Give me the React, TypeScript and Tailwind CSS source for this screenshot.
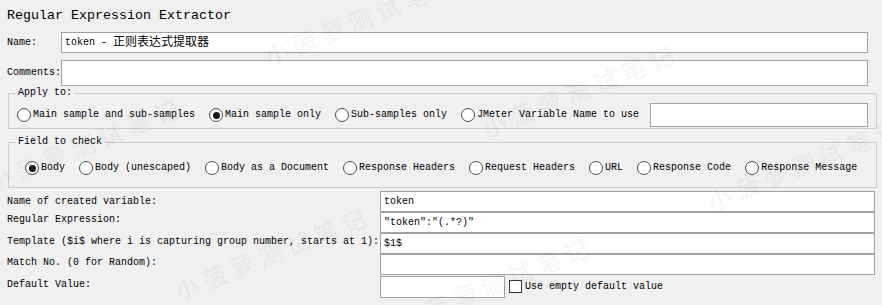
import React from "react";

const mono = { fontFamily: '"Liberation Mono", "Noto Sans CJK SC", monospace' };

function Radio({ checked }: { checked?: boolean }) {
  return (
    <span className="w-[14px] h-[14px] rounded-full border border-[#4a4a4a] bg-white flex items-center justify-center shrink-0">
      {checked && <span className="w-[7px] h-[7px] rounded-full bg-[#1a1a1a]" />}
    </span>
  );
}

function RadioItem({ label, checked }: { label: string; checked?: boolean }) {
  return (
    <div className="flex items-center gap-[2px] h-[14px]">
      <Radio checked={checked} />
      <span className="leading-[14px] whitespace-pre">{label}</span>
    </div>
  );
}

function Box({ className, children }: { className?: string; children?: React.ReactNode }) {
  return (
    <div className={"bg-white border border-[#a2a2a2] flex items-center pl-[3px] leading-[12px] whitespace-pre " + (className ?? "")}>
      {children}
    </div>
  );
}

const marks: { x: number; y: number }[] = [
  { x: 272, y: 70 },
  { x: 490, y: 142 },
  { x: 715, y: 215 },
  { x: -5, y: 196 },
  { x: 182, y: 305 },
  { x: 405, y: 335 },
];

export default function App() {
  return (
    <div className="relative w-[882px] h-[305px] bg-[#f0f0f0] overflow-hidden text-[10px] text-[#000]" style={mono}>
      <div className="pl-[7px] pt-[8px] h-[24px] text-[13.33px] leading-[16px]">Regular Expression Extractor</div>

      <div className="flex items-center mt-[8px] h-[21px]">
        <div className="w-[61px] pl-[7px] leading-[12px]">Name:</div>
        <Box className="w-[807px] h-[21px]">
          token - <span className="text-[12px]">正则表达式提取器</span>
        </Box>
      </div>

      <div className="flex items-center mt-[7px] h-[26px]">
        <div className="w-[61px] pl-[7px] leading-[12px]">Comments:</div>
        <Box className="w-[807px] h-[26px]" />
      </div>

      <fieldset className="ml-[8px] w-[869px] mt-[1px] border border-[#cdcdcd] pt-[4px] pb-[1px] pl-[8px] pr-[8px]">
        <legend className="ml-[-1px] px-[2px] leading-[12px] h-[12px]">Apply to:</legend>
        <div className="flex items-center h-[24px]">
          <div className="flex items-center gap-[14px]">
            <RadioItem label="Main sample and sub-samples" />
            <RadioItem label="Main sample only" checked />
            <RadioItem label="Sub-samples only" />
            <RadioItem label="JMeter Variable Name to use" />
          </div>
          <Box className="flex-1 ml-[11px] h-[24px]" />
        </div>
      </fieldset>

      <fieldset className="ml-[8px] w-[869px] mt-[7px] border border-[#cdcdcd] pt-[13px] pb-[12px] pl-[16px] pr-[8px]">
        <legend className="ml-[-9px] px-[2px] leading-[12px] h-[12px]">Field to check</legend>
        <div className="flex items-center gap-[14px] h-[14px]">
          <RadioItem label="Body" checked />
          <RadioItem label="Body (unescaped)" />
          <RadioItem label="Body as a Document" />
          <RadioItem label="Response Headers" />
          <RadioItem label="Request Headers" />
          <RadioItem label="URL" />
          <RadioItem label="Response Code" />
          <RadioItem label="Response Message" />
        </div>
      </fieldset>

      <div className="mt-[3px] grid grid-cols-[373px_495px] pl-[7px]">
        <div className="h-[21px] pt-[5px] leading-[12px] whitespace-pre">Name of created variable:</div>
        <Box className="h-[21px]">token</Box>
        <div className="h-[21px] pt-[2px] leading-[12px] whitespace-pre">Regular Expression:</div>
        <Box className="h-[21px]">"token":"(.*?)"</Box>
        <div className="h-[21px] pt-[3px] leading-[12px] whitespace-pre">Template ($i$ where i is capturing group number, starts at 1):</div>
        <Box className="h-[21px] pl-[1px]">$1$</Box>
        <div className="h-[21px] pt-[3px] leading-[12px] whitespace-pre">Match No. (0 for Random):</div>
        <Box className="h-[21px]" />
        <div className="h-[23px] pt-[4px] leading-[12px] whitespace-pre">Default Value:</div>
        <div className="h-[23px] pt-[1px] flex items-start">
          <Box className="w-[125px] h-[22px]" />
          <div className="flex items-center ml-[4px] mt-[4px] gap-[3px]">
            <span className="w-[13px] h-[13px] border border-[#333] bg-white shrink-0" />
            <span className="leading-[13px] whitespace-pre">Use empty default value</span>
          </div>
        </div>
      </div>

      {marks.map((m, i) => (
        <div
          key={i}
          className="absolute pointer-events-none whitespace-pre text-[24px] font-bold tracking-[6px] text-[rgba(0,0,0,0.05)] rotate-[-22deg] origin-bottom-left"
          style={{ left: m.x, top: m.y - 32, fontFamily: '"Noto Sans CJK SC", sans-serif' }}
        >
          小菠萝测试笔记
        </div>
      ))}
    </div>
  );
}
